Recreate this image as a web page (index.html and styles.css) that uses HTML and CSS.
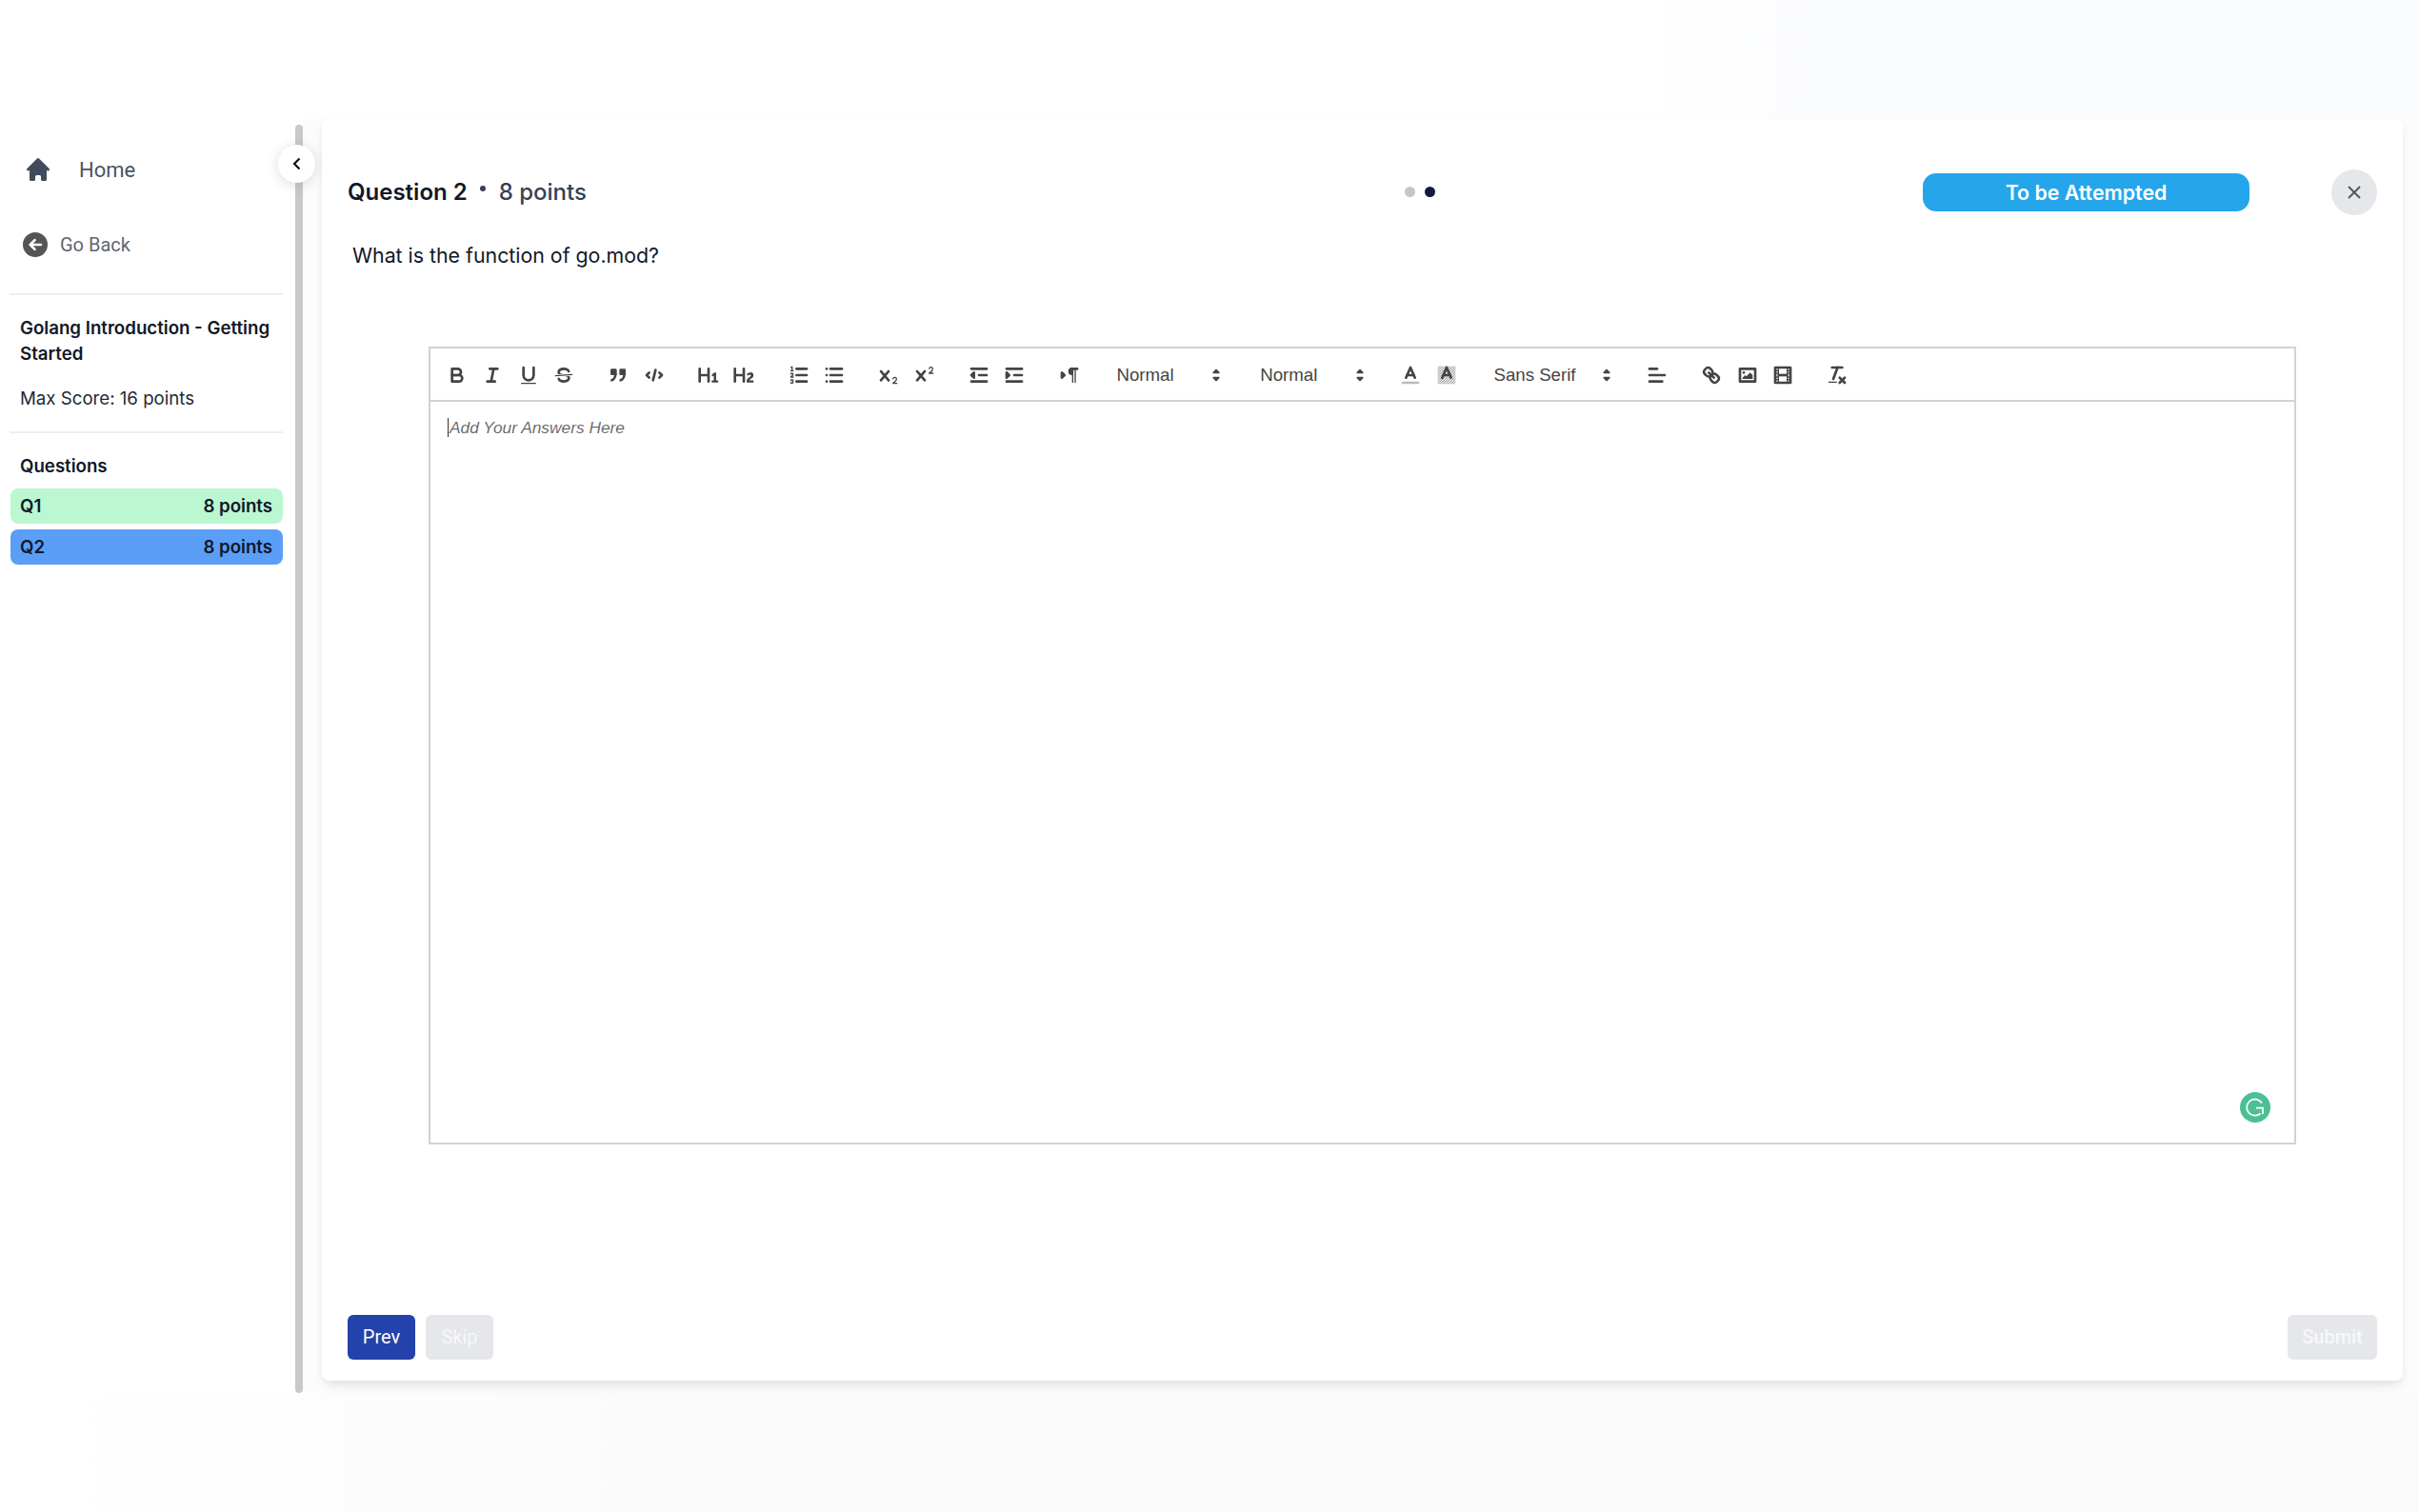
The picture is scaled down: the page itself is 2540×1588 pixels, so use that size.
FILE: index.html
```html
<!DOCTYPE html>
<html lang="en">
<head>
<meta charset="utf-8">
<title>Question 2</title>
<link rel="stylesheet" href="styles.css">
</head>
<body>
<div class="band-top"></div>
<div class="middle">
  <aside class="sidebar">
    <nav class="side-content">
      <a class="home-row">
        <svg class="home-icon" viewBox="0 0 20 20"><path d="M10.707 2.293a1 1 0 00-1.414 0l-7 7a1 1 0 001.414 1.414L4 10.414V17a1 1 0 001 1h2a1 1 0 001-1v-2a1 1 0 011-1h2a1 1 0 011 1v2a1 1 0 001 1h2a1 1 0 001-1v-6.586l.293.293a1 1 0 001.414-1.414l-7-7z"/></svg>
        <span>Home</span>
      </a>
      <a class="back-row">
        <svg class="back-icon" viewBox="0 0 26 26"><circle cx="13" cy="13" r="13" fill="#555"/><path d="M19 13H8M12.5 8.2 7.7 13l4.8 4.8" fill="none" stroke="#fff" stroke-width="2.6" stroke-linecap="round" stroke-linejoin="round"/></svg>
        <span>Go Back</span>
      </a>
      <hr class="rule rule-first">
      <h2 class="course">Golang Introduction - Getting Started</h2>
      <p class="score">Max Score: 16 points</p>
      <hr class="rule rule-second">
      <h3 class="q-heading">Questions</h3>
      <div class="q-item q-done"><span>Q1</span><span>8 points</span></div>
      <div class="q-item q-current"><span>Q2</span><span>8 points</span></div>
    </nav>
    <div class="scrollbar"></div>
    <button class="collapse" aria-label="Collapse"><svg viewBox="0 0 12 16"><path d="M8.5 2.5 3 8l5.5 5.5" fill="none" stroke="#111" stroke-width="2.2"/></svg></button>
  </aside>

  <main class="card">
    <header class="q-head">
      <div class="q-title"><strong>Question 2</strong><i class="sep"></i><span>8 points</span></div>
      <div class="dots"><i class="dot"></i><i class="dot dot-on"></i></div>
      <div class="status">To be Attempted</div>
      <button class="close" aria-label="Close"><svg viewBox="0 0 16 16"><path d="M2 2l12 12M14 2 2 14" fill="none" stroke="#4b5563" stroke-width="1.8"/></svg></button>
    </header>
    <p class="q-text">What is the function of go.mod?</p>

    <section class="editor">
      <div class="toolbar">
        <span class="tb-group">
          <button class="tb"><svg viewBox="0 0 18 18"><path d="M5,4H9.5A2.5,2.5,0,0,1,12,6.5v0A2.5,2.5,0,0,1,9.5,9H5A0,0,0,0,1,5,9V4A0,0,0,0,1,5,4Z"/><path d="M5,9h5.5A2.5,2.5,0,0,1,13,11.5v0A2.5,2.5,0,0,1,10.5,14H5a0,0,0,0,1,0,0V9A0,0,0,0,1,5,9Z"/></svg></button>
          <button class="tb"><svg viewBox="0 0 18 18"><line x1="7" x2="13" y1="4" y2="4"/><line x1="5" x2="11" y1="14" y2="14"/><line x1="8" x2="10" y1="14" y2="4"/></svg></button>
          <button class="tb"><svg viewBox="0 0 18 18"><path d="M5,3V9a4.012,4.012,0,0,0,4,4H9a4.012,4.012,0,0,0,4-4V3"/><rect class="f" height="1" rx=".5" ry=".5" width="12" x="3" y="15"/></svg></button>
          <button class="tb"><svg viewBox="0 0 18 18"><line class="thin" x1="15.5" x2="2.5" y1="8.5" y2="9.5"/><path class="f" d="M9.007,8C6.542,7.791,6,7.519,6,6.5,6,5.792,7.283,5,9,5c1.571,0,2.765.679,2.969,1.309a1,1,0,0,0,1.9-.617C13.356,4.106,11.354,3,9,3,6.2,3,4,4.538,4,6.5a3.2,3.2,0,0,0,.5,1.843Z"/><path class="f" d="M8.984,10C11.457,10.208,12,10.479,12,11.5c0,.708-1.283,1.5-3,1.5-1.571,0-2.765-.679-2.969-1.309a1,1,0,1,0-1.9.617C4.644,13.894,6.646,15,9,15c2.8,0,5-1.538,5-3.5a3.2,3.2,0,0,0-.5-1.843Z"/></svg></button>
        </span>
        <span class="tb-group">
          <button class="tb"><svg viewBox="0 0 18 18"><rect class="fs" height="3" width="3" x="4" y="5"/><rect class="fs" height="3" width="3" x="11" y="5"/><path class="ns" d="M7,8c0,4.031-3,5-3,5"/><path class="ns" d="M14,8c0,4.031-3,5-3,5"/></svg></button>
          <button class="tb"><svg viewBox="0 0 18 18"><polyline points="5 7 3 9 5 11"/><polyline points="13 7 15 9 13 11"/><line x1="10" x2="8" y1="5" y2="13"/></svg></button>
        </span>
        <span class="tb-group">
          <button class="tb"><svg viewBox="0 0 18 18"><path class="f" d="M10,4V14a1,1,0,0,1-2,0V10H3v4a1,1,0,0,1-2,0V4A1,1,0,0,1,3,4V8H8V4a1,1,0,0,1,2,0Zm6.06787,9.209H14.98975V7.59863a.54085.54085,0,0,0-.605-.60547h-.62744a1.01119,1.01119,0,0,0-.748.29688L11.645,8.56641a.5435.5435,0,0,0-.022.8584l.28613.30762a.53861.53861,0,0,0,.84717.0332l.09912-.08789a1.2137,1.2137,0,0,0,.2417-.35254h.02246s-.01123.30859-.01123.60547V13.209H12.041a.54085.54085,0,0,0-.605.60547v.43945a.54085.54085,0,0,0,.605.60547h4.02686a.54085.54085,0,0,0,.605-.60547v-.43945A.54085.54085,0,0,0,16.06787,13.209Z"/></svg></button>
          <button class="tb"><svg viewBox="0 0 18 18"><path class="f" d="M16.73975,13.81445v.43945a.54085.54085,0,0,1-.605.60547H11.855a.58392.58392,0,0,1-.64893-.60547V14.0127c0-2.90527,3.39941-3.42187,3.39941-4.55469a.77675.77675,0,0,0-.84717-.78125,1.17684,1.17684,0,0,0-.83594.38477c-.2749.26367-.561.374-.85791.13184l-.4292-.34082c-.30811-.24219-.38525-.51758-.1543-.81445a2.97155,2.97155,0,0,1,2.45361-1.17676,2.45393,2.45393,0,0,1,2.68408,2.40918c0,2.45312-3.1792,2.92676-3.27832,3.93848h2.79443A.54085.54085,0,0,1,16.73975,13.81445ZM9,3A.99974.99974,0,0,0,8,4V8H3V4A1,1,0,0,0,1,4V14a1,1,0,0,0,2,0V10H8v4a1,1,0,0,0,2,0V4A.99974.99974,0,0,0,9,3Z"/></svg></button>
        </span>
        <span class="tb-group">
          <button class="tb"><svg viewBox="0 0 18 18"><line x1="7" x2="15" y1="4" y2="4"/><line x1="7" x2="15" y1="9" y2="9"/><line x1="7" x2="15" y1="14" y2="14"/><line class="thin" x1="2.5" x2="4.5" y1="5.5" y2="5.5"/><path class="f" d="M3.5,6A0.5,0.5,0,0,1,3,5.5V3.085l-0.276.138A0.5,0.5,0,0,1,2.053,3c-0.124-.247-0.023-0.324.224-0.447l1-.5A0.5,0.5,0,0,1,4,2.5v3A0.5,0.5,0,0,1,3.5,6Z"/><path class="thin" d="M4.5,10.5h-2c0-.234,1.85-1.076,1.85-2.234A0.959,0.959,0,0,0,2.5,8.156"/><path class="thin" d="M2.5,14.846a0.959,0.959,0,0,0,1.85-.109A0.7,0.7,0,0,0,3.75,14a0.688,0.688,0,0,0,.6-0.736,0.959,0.959,0,0,0-1.85-.109"/></svg></button>
          <button class="tb"><svg viewBox="0 0 18 18"><line x1="6" x2="15" y1="4" y2="4"/><line x1="6" x2="15" y1="9" y2="9"/><line x1="6" x2="15" y1="14" y2="14"/><line x1="3" x2="3" y1="4" y2="4"/><line x1="3" x2="3" y1="9" y2="9"/><line x1="3" x2="3" y1="14" y2="14"/></svg></button>
        </span>
        <span class="tb-group">
          <button class="tb"><svg viewBox="0 0 18 18"><path class="f" d="M15.5,15H13.861a3.858,3.858,0,0,0,1.914-2.975,1.8,1.8,0,0,0-1.6-1.751A1.921,1.921,0,0,0,12.021,11.7a0.50013,0.50013,0,1,0,.957.291h0a0.914,0.914,0,0,1,1.053-.725,0.81,0.81,0,0,1,.744.762c0,1.076-1.16971,1.86982-1.93971,2.43082A1.45639,1.45639,0,0,0,12,15.5a0.5,0.5,0,0,0,.5.5h3A0.5,0.5,0,0,0,15.5,15Z"/><path class="f" d="M9.65,5.241a1,1,0,0,0-1.409.108L6,7.964,3.759,5.349A1,1,0,0,0,2.192,6.59178Q2.21541,6.6213,2.241,6.649L4.684,9.5,2.241,12.35A1,1,0,0,0,3.71,13.70722q0.02557-.02768.049-0.05722L6,11.036,8.241,13.65a1,1,0,1,0,1.567-1.24277Q9.78459,12.3777,9.759,12.35L7.316,9.5,9.759,6.651A1,1,0,0,0,9.65,5.241Z"/></svg></button>
          <button class="tb"><svg viewBox="0 0 18 18"><path class="f" d="M15.5,7H13.861a4.015,4.015,0,0,0,1.914-2.975,1.8,1.8,0,0,0-1.6-1.751A1.922,1.922,0,0,0,12.021,3.7a0.5,0.5,0,1,0,.957.291,0.917,0.917,0,0,1,1.053-.725,0.81,0.81,0,0,1,.744.762c0,1.077-1.164,1.925-1.934,2.486A1.423,1.423,0,0,0,12,7.5a0.5,0.5,0,0,0,.5.5h3A0.5,0.5,0,0,0,15.5,7Z"/><path class="f" d="M9.651,5.241a1,1,0,0,0-1.41.108L6,7.964,3.759,5.349a1,1,0,1,0-1.519,1.3L4.683,9.5,2.241,12.35a1,1,0,1,0,1.519,1.3L6,11.036l2.241,2.615a1,1,0,0,0,1.519-1.3L7.317,9.5,9.759,6.651A1,1,0,0,0,9.651,5.241Z"/></svg></button>
        </span>
        <span class="tb-group">
          <button class="tb"><svg viewBox="0 0 18 18"><line x1="3" x2="15" y1="14" y2="14"/><line x1="3" x2="15" y1="4" y2="4"/><line x1="9" x2="15" y1="9" y2="9"/><polyline class="fs" points="5 7 5 11 3 9 5 7"/></svg></button>
          <button class="tb"><svg viewBox="0 0 18 18"><line x1="3" x2="15" y1="14" y2="14"/><line x1="3" x2="15" y1="4" y2="4"/><line x1="9" x2="15" y1="9" y2="9"/><polyline class="fs" points="3 7 3 11 5 9 3 7"/></svg></button>
        </span>
        <span class="tb-group">
          <button class="tb"><svg viewBox="0 0 18 18"><polygon class="fs" points="3 11 5 9 3 7 3 11"/><line x1="15" x2="11" y1="4" y2="4"/><path class="f" d="M11,3a3,3,0,0,0,0,6h1V3H11Z"/><rect class="f" height="11" width="1" x="11" y="4"/><rect class="f" height="11" width="1" x="13" y="4"/></svg></button>
        </span>
        <span class="tb-group">
          <button class="picker picker-std"><span>Normal</span><svg viewBox="0 0 18 18"><polygon class="fs" points="7 11 9 13 11 11 7 11"/><polygon class="fs" points="7 7 9 5 11 7 7 7"/></svg></button>
        </span>
        <span class="tb-group">
          <button class="picker picker-std"><span>Normal</span><svg viewBox="0 0 18 18"><polygon class="fs" points="7 11 9 13 11 11 7 11"/><polygon class="fs" points="7 7 9 5 11 7 7 7"/></svg></button>
        </span>
        <span class="tb-group">
          <button class="tb"><svg viewBox="0 0 18 18"><line class="label" x1="3" x2="15" y1="15" y2="15"/><polyline points="5.5 11 9 3 12.5 11"/><line x1="11.63" x2="6.38" y1="9" y2="9"/></svg></button>
          <button class="tb"><svg viewBox="0 0 18 18"><defs><pattern id="hatch" width="2" height="2" patternUnits="userSpaceOnUse"><path d="M0 2 2 0" stroke="#555" stroke-width=".6"/></pattern></defs><rect class="hatch" x="2" y="2" width="14" height="14"/><polyline points="5.5 11 9 3 12.5 11"/><line x1="11.63" x2="6.38" y1="9" y2="9"/></svg></button>
        </span>
        <span class="tb-group">
          <button class="picker picker-font"><span>Sans Serif</span><svg viewBox="0 0 18 18"><polygon class="fs" points="7 11 9 13 11 11 7 11"/><polygon class="fs" points="7 7 9 5 11 7 7 7"/></svg></button>
        </span>
        <span class="tb-group">
          <button class="tb"><svg viewBox="0 0 18 18"><line x1="3" x2="15" y1="9" y2="9"/><line x1="3" x2="13" y1="14" y2="14"/><line x1="3" x2="9" y1="4" y2="4"/></svg></button>
        </span>
        <span class="tb-group">
          <button class="tb"><svg viewBox="0 0 18 18"><line x1="7" x2="11" y1="7" y2="11"/><path d="M8.9,4.577a3.476,3.476,0,0,1,.36,4.679A3.476,3.476,0,0,1,4.577,8.9C3.185,7.5,2.035,6.4,4.217,4.217S7.5,3.185,8.9,4.577Z"/><path d="M13.423,9.1a3.476,3.476,0,0,0-4.679-.36,3.476,3.476,0,0,0,.36,4.679c1.392,1.392,2.5,2.542,4.679.36S14.815,10.5,13.423,9.1Z"/></svg></button>
          <button class="tb"><svg viewBox="0 0 18 18"><rect height="10" width="12" x="3" y="4"/><circle class="f" cx="6" cy="7" r="1"/><polyline class="f" points="5 12 5 11 7 9 8 10 11 7 13 9 13 12 5 12"/></svg></button>
          <button class="tb"><svg viewBox="0 0 18 18"><rect height="12" width="12" x="3" y="3"/><rect class="f" height="12" width="1" x="5" y="3"/><rect class="f" height="12" width="1" x="12" y="3"/><rect class="f" height="2" width="8" x="5" y="8"/><rect class="f" height="1" width="3" x="3" y="5"/><rect class="f" height="1" width="3" x="3" y="7"/><rect class="f" height="1" width="3" x="3" y="10"/><rect class="f" height="1" width="3" x="3" y="12"/><rect class="f" height="1" width="3" x="12" y="5"/><rect class="f" height="1" width="3" x="12" y="7"/><rect class="f" height="1" width="3" x="12" y="10"/><rect class="f" height="1" width="3" x="12" y="12"/></svg></button>
        </span>
        <span class="tb-group">
          <button class="tb"><svg viewBox="0 0 18 18"><line x1="5" x2="13" y1="3" y2="3"/><line x1="6" x2="9.35" y1="12" y2="3"/><line x1="11" x2="15" y1="11" y2="15"/><line x1="15" x2="11" y1="11" y2="15"/><rect class="f" height="1" rx=".5" ry=".5" width="7" x="2" y="14"/></svg></button>
        </span>
      </div>
      <div class="edit-area">
        <p class="placeholder"><i class="caret"></i>Add Your Answers Here</p>
        <svg class="grammarly" viewBox="0 0 32 32"><circle cx="16" cy="16" r="16" fill="#4cbf95"/><path d="M23 11.5A8.6 8.6 0 1 0 21.5 22.5" fill="none" stroke="#fff" stroke-width="1.8"/><path d="M17 16.6h7v6.4" fill="none" stroke="#fff" stroke-width="1.8"/></svg>
      </div>
    </section>

    <footer class="actions">
      <div class="action-left">
        <button class="btn btn-prev">Prev</button>
        <button class="btn btn-off btn-skip">Skip</button>
      </div>
      <button class="btn btn-off btn-submit">Submit</button>
    </footer>
  </main>
</div>
<div class="band-bottom"></div>
</body>
</html>
```

FILE: styles.css
```css
* { box-sizing: border-box; }
html, body { margin: 0; height: 100%; }
body {
  width: 2540px;
  height: 1588px;
  overflow: hidden;
  background: #fff;
  font-family: Inter, "Liberation Sans", sans-serif;
  color: #111827;
}
button { border: 0; padding: 0; background: none; font: inherit; }
.band-top {
  height: 125px;
  background: linear-gradient(90deg, #fff 0, #fff 68%, #fbfcfe 76%, #fbfcfe 100%);
}
.middle { display: flex; align-items: flex-start; height: 1338px; background: #fcfcfc; }
.band-bottom {
  height: 125px;
  background: linear-gradient(90deg, #fff 2%, #fbfbfb 26%, #fbfbfb 100%);
}

/* Sidebar */
.sidebar {
  position: relative;
  flex: none;
  display: flex;
  width: 318px;
  height: 1338px;
  background: #fff;
}
.side-content { width: 310px; padding: 0 13px 0 10px; }
.home-row {
  display: flex;
  align-items: center;
  height: 106px;
  padding-left: 15px;
  font: 400 22px Roboto, sans-serif;
  color: #4b5563;
}
.home-icon { width: 30px; height: 30px; margin-right: 28px; fill: #414b5c; }
.back-row {
  display: flex;
  align-items: center;
  height: 52px;
  padding-left: 14px;
  font: 400 20px Roboto, sans-serif;
  color: #5f6673;
}
.back-icon { width: 26px; height: 26px; margin-right: 13px; }
.rule { margin: 0; border: 0; height: 2px; background: #eceef1; }
.rule-first { margin-top: 25px; }
.rule-second { margin-top: 21px; }
.course {
  margin: 22px 0 0;
  padding-left: 11px;
  font-size: 18.67px;
  font-weight: 600;
  line-height: 26.6px;
  color: #111827;
}
.score { margin: 21px 0 0; padding-left: 11px; font-size: 18.67px; line-height: 26px; color: #1f2937; }
.q-heading { margin: 22px 0 10px; padding-left: 11px; font-size: 18.67px; font-weight: 600; line-height: 26px; }
.q-item {
  display: flex;
  justify-content: space-between;
  align-items: center;
  height: 37px;
  margin: 0 0 6px 1px;
  padding: 0 11px 0 10px;
  border-radius: 8px;
  font-size: 18.67px;
  font-weight: 600;
  color: #111827;
}
.q-done { background: #bbf7d0; }
.q-current { background: #5b9ef8; }
.scrollbar { width: 8px; height: 1332px; margin-top: 6px; border-radius: 4px; background: #c9c9c9; }
.collapse {
  position: absolute;
  top: 27px;
  left: 292px;
  display: flex;
  align-items: center;
  justify-content: center;
  width: 39px;
  height: 40px;
  border-radius: 50%;
  background: #fff;
  box-shadow: 0 2px 14px rgba(0, 0, 0, .14);
}
.collapse svg { width: 12px; height: 16px; }

/* Card */
.card {
  flex: none;
  display: flex;
  flex-direction: column;
  width: 2185px;
  height: 1325px;
  margin-left: 20px;
  padding: 53px 27px 22px;
  border-radius: 8px;
  background: #fff;
  box-shadow: 0 8px 14px -4px rgba(0, 0, 0, .1), 0 2px 6px rgba(0, 0, 0, .04);
}
.q-head { display: flex; align-items: center; height: 48px; }
.q-title { display: flex; align-items: center; width: 1110px; margin-bottom: 2px; font-size: 24px; font-weight: 500; color: #374151; }
.q-title strong { font-weight: 600; color: #111827; }
.sep { width: 6px; height: 6px; margin: -6px 14px 0 13px; border-radius: 50%; background: #374151; }
.dots { display: flex; gap: 10px; margin-bottom: 2px; }
.dot { width: 11px; height: 11px; border-radius: 50%; background: #c3c6cb; }
.dot-on { background: #111b3d; }
.status {
  display: flex;
  align-items: center;
  justify-content: center;
  width: 343px;
  height: 40px;
  margin-left: auto;
  border-radius: 14px;
  background: #25a5ea;
  color: #fff;
  font-size: 21.33px;
  font-weight: 600;
}
.close {
  display: flex;
  align-items: center;
  justify-content: center;
  flex: none;
  width: 48px;
  height: 48px;
  margin-left: 86px;
  border-radius: 50%;
  background: #e5e7eb;
}
.close svg { width: 16px; height: 16px; }
.q-text { margin: 26px 0 0 5px; font-size: 21.33px; line-height: 32px; color: #111827; }

/* Editor */
.editor {
  display: flex;
  flex-direction: column;
  width: 1961px;
  height: 838px;
  margin: 80px 0 0 85px;
  border: 2px solid #d2d2d2;
  font-family: "Liberation Sans", Arial, sans-serif;
}
.toolbar {
  display: flex;
  align-items: center;
  gap: 20px;
  flex: none;
  height: 56px;
  padding: 2px 0 0 9.4px;
  border-bottom: 2px solid #d2d2d2;
}
.tb-group { display: flex; align-items: center; }
.tb, .picker { display: flex; align-items: center; justify-content: center; height: 32px; }
.tb { width: 37.33px; padding: 4px 6.67px; }
.toolbar svg { display: block; width: 24px; height: 24px; fill: none; stroke: #444; stroke-width: 2; stroke-linecap: round; stroke-linejoin: round; }
.toolbar svg .f { fill: #444; stroke: none; }
.toolbar svg .fs { fill: #444; }
.toolbar svg .ns { fill: none; }
.toolbar svg .thin { stroke-width: 1; }
.toolbar svg .label { stroke: #bbb; }
.toolbar svg .hatch { fill: url(#hatch); stroke: none; }
.picker {
  justify-content: space-between;
  padding: 0 2.67px 0 11.2px;
  font-size: 18.67px;
  font-weight: 400;
  color: #444;
}
.picker svg { stroke-width: 1.5; }
.picker-std { width: 130.67px; }
.picker-font { width: 144px; }
.edit-area { position: relative; flex: 1; padding: 14px 16px; }
.placeholder {
  display: flex;
  align-items: center;
  margin: 0;
  font-size: 17.33px;
  font-style: italic;
  line-height: 26px;
  color: rgba(0, 0, 0, .6);
}
.caret { width: 1px; height: 20px; margin: 0 1px 0 2px; background: #333; }
.grammarly { position: absolute; right: 25px; bottom: 21px; width: 32px; height: 32px; }

/* Footer */
.actions { display: flex; justify-content: space-between; margin-top: auto; }
.action-left { display: flex; gap: 11px; }
.btn { height: 47px; padding-bottom: 2px; border-radius: 6px; font: 400 20px Roboto, sans-serif; color: #fff; }
.btn-prev { width: 71px; background: #2442ab; }
.btn-off { background: #e5e7eb; color: #f7f8f9; }
.btn-skip { width: 71px; }
.btn-submit { width: 94px; font-weight: 500; }
```
